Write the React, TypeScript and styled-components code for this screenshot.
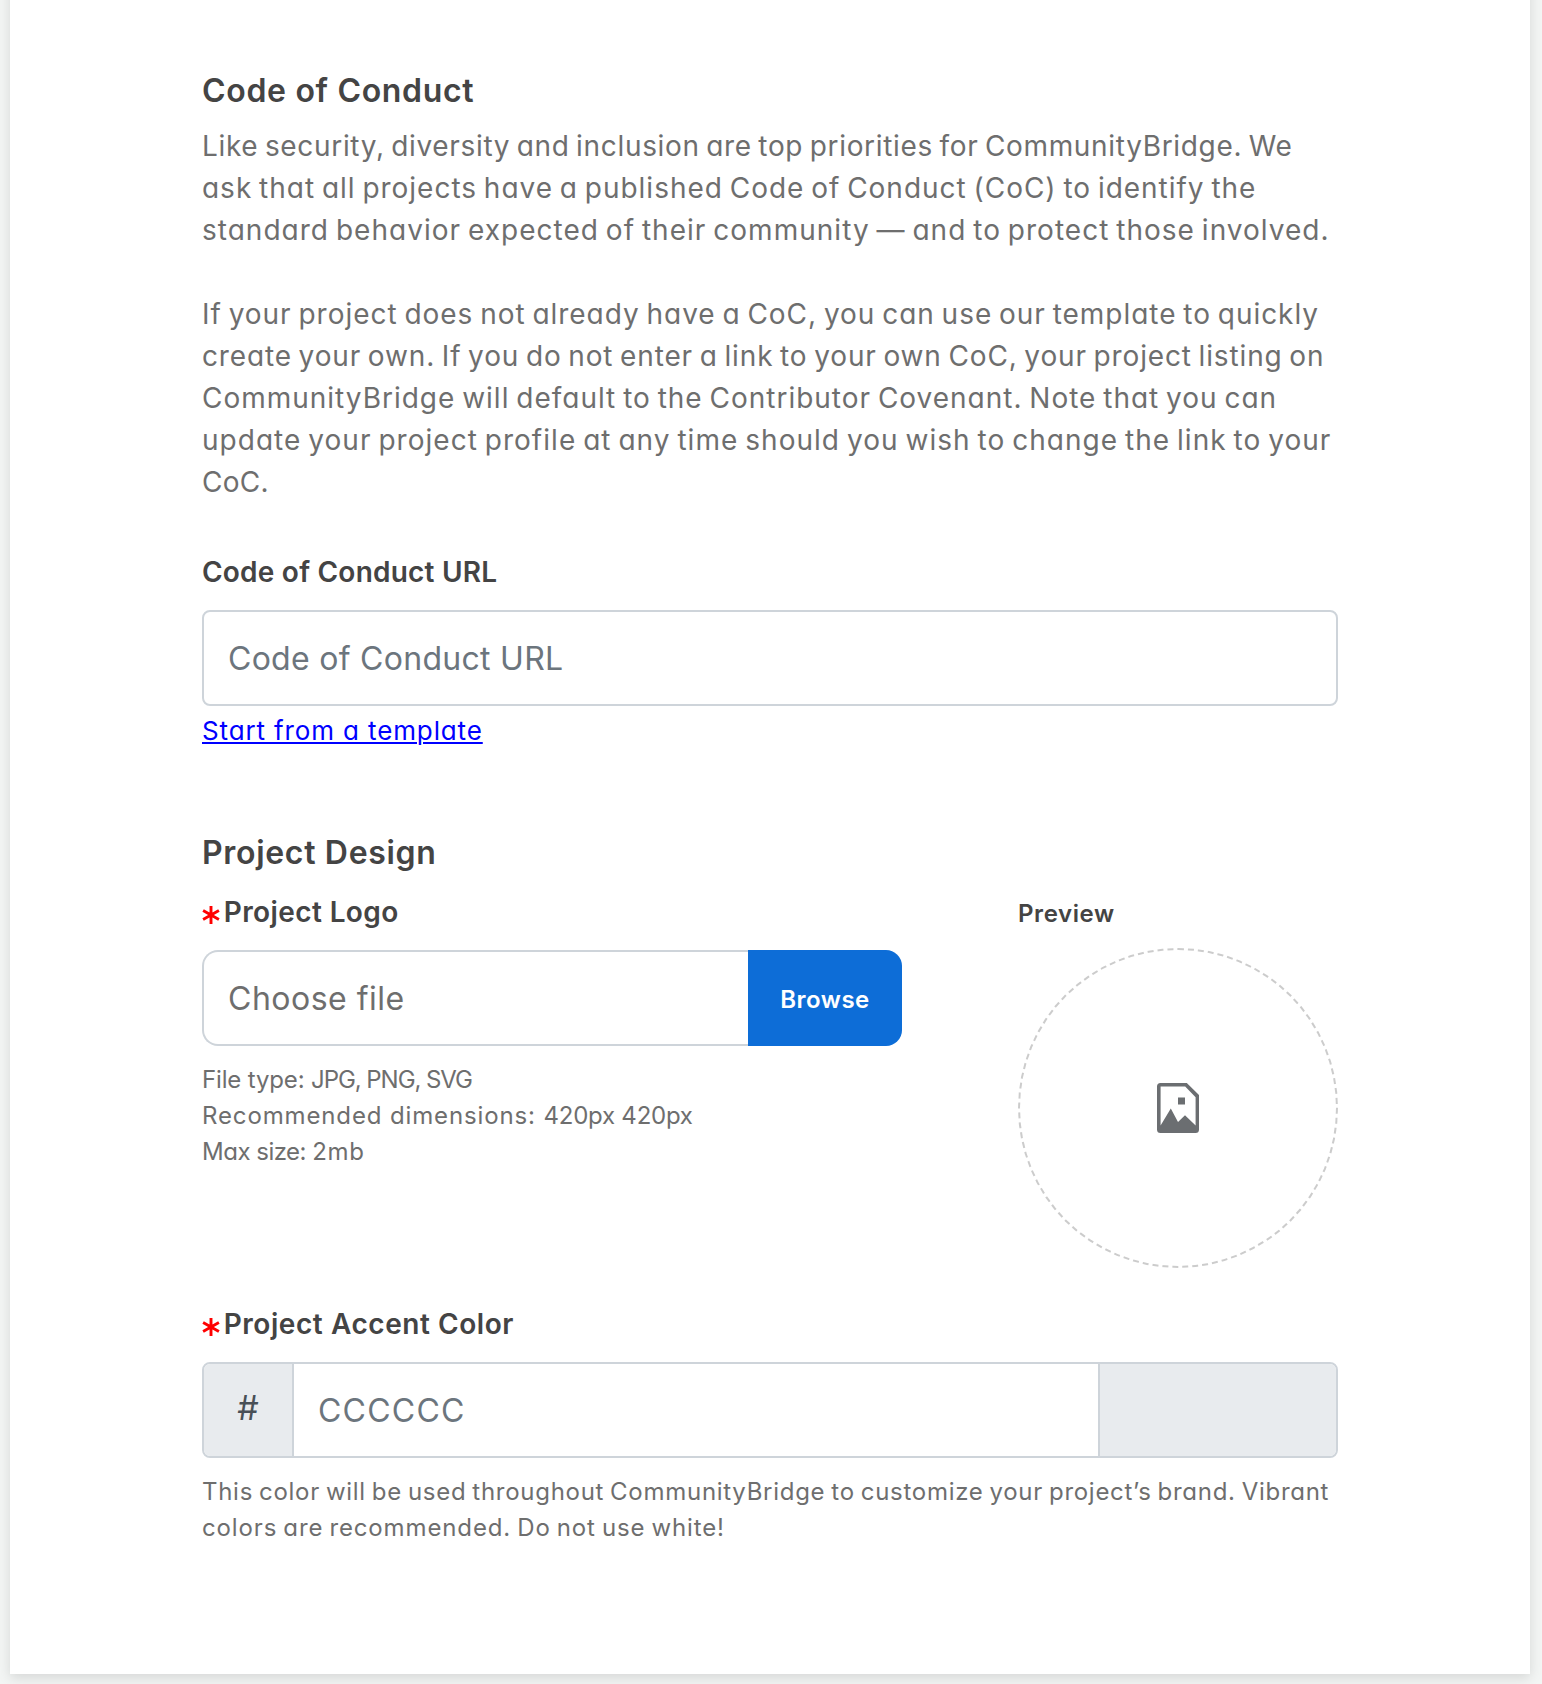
import React from 'react';
import styled, { createGlobalStyle } from 'styled-components';

const colors = {
  page: '#f3f5f4',
  heading: '#444444',
  body: '#6e6e6e',
  placeholder: '#6c757d',
  border: '#ced4da',
  addon: '#e8ebee',
  primary: '#0d6dd7',
  required: '#ff0000',
  link: '#0000ff',
};

const GlobalStyle = createGlobalStyle`
  *, *::before, *::after { box-sizing: border-box; }
  body {
    margin: 0;
    background: ${colors.page};
    color: ${colors.body};
    font-family: Inter, 'Open Sans', sans-serif;
    font-feature-settings: 'cv11';
  }
  input, button { font: inherit; font-feature-settings: inherit; }
`;

const Page = styled.div`
  height: 1684px;
  padding: 0 12px 0 10px;
  overflow: hidden;
`;

const Card = styled.main`
  height: 1694px;
  margin-top: -20px;
  padding: 87px 192px 0;
  background: #fff;
  box-shadow: 0 4px 12px rgba(0, 0, 0, 0.12);
`;

const Section = styled.section<{ $gap?: number }>`
  display: flex;
  flex-direction: column;
  margin-top: ${p => p.$gap ?? 0}px;
`;

const Heading = styled.h2`
  margin: 0;
  color: ${colors.heading};
  font-size: 32px;
  font-weight: 600;
  line-height: 48px;
  letter-spacing: 0.68px;
`;

const Paragraph = styled.p<{ $gap: number }>`
  display: flex;
  flex-direction: column;
  margin: ${p => p.$gap}px 0 0;
  font-size: 28px;
  line-height: 42px;
  word-spacing: -2px;
`;

const Hint = styled.p`
  display: flex;
  flex-direction: column;
  margin: 16px 0 0;
  font-size: 24px;
  line-height: 36px;
`;

const HintRow = styled.span`
  display: block;
  white-space: pre;
`;

const Line = styled.span<{ $track: number; $words?: number }>`
  white-space: pre;
  letter-spacing: ${p => p.$track}px;
  ${p => p.$words !== undefined && `word-spacing: ${p.$words}px;`}
`;

const Label = styled.label<{ $gap: number; $track: number }>`
  display: flex;
  align-items: center;
  gap: 3.7px;
  margin: ${p => p.$gap}px 0 17px;
  color: ${colors.heading};
  font-size: 28px;
  font-weight: 600;
  line-height: 42px;
  letter-spacing: ${p => p.$track}px;
`;

const Star = styled.svg`
  width: 18px;
  height: 18px;
  margin-top: 6px;
  fill: none;
  stroke: ${colors.required};
  stroke-width: 2.9;
`;

const PreviewLabel = styled.div`
  margin-bottom: 16px;
  color: ${colors.heading};
  font-size: 24px;
  font-weight: 600;
  line-height: 36px;
  letter-spacing: 0.59px;
`;

const TextInput = styled.input<{ $track: number }>`
  flex: 1;
  width: 100%;
  min-width: 0;
  height: 96px;
  flex-basis: 96px;
  padding: 0 24px;
  border: 2px solid ${colors.border};
  border-radius: 8px;
  background: #fff;
  font-size: 32px;
  letter-spacing: ${p => p.$track}px;
  outline: none;
  &::placeholder { color: ${colors.placeholder}; opacity: 1; }
`;

const TemplateLink = styled.a`
  align-self: flex-start;
  margin-top: 5px;
  color: ${colors.link};
  font-size: 26px;
  line-height: 39px;
  letter-spacing: 0.87px;
  text-decoration: underline;
  text-decoration-thickness: 2px;
  text-underline-offset: 2px;
`;

const LogoRow = styled.div`
  display: flex;
  justify-content: space-between;
`;

const UploadColumn = styled.div`
  width: 700px;
`;

const PreviewColumn = styled.div`
  width: 320px;
  padding-top: 19px;
`;

const FilePicker = styled.div`
  display: flex;
  height: 96px;
`;

const FileName = styled.div`
  flex: 1;
  padding: 1px 0 0 24px;
  border: 2px solid ${colors.border};
  border-right: 0;
  border-radius: 16px 0 0 16px;
  font-size: 32px;
  line-height: 92px;
  letter-spacing: 0.5px;
`;

const BrowseButton = styled.button`
  width: 154px;
  padding: 2px 0 0;
  border: 0;
  border-radius: 0 16px 16px 0;
  background: ${colors.primary};
  color: #fff;
  font-size: 24px;
  font-weight: 600;
  letter-spacing: 0.48px;
`;

const PreviewCircle = styled.div`
  display: flex;
  align-items: center;
  justify-content: center;
  width: 320px;
  height: 320px;
  border: 2px dashed #cccccc;
  border-radius: 50%;
`;

const ColorGroup = styled.div`
  display: flex;
  height: 96px;
  border: 2px solid ${colors.border};
  border-radius: 8px;
  overflow: hidden;
`;

const HashAddon = styled.span`
  width: 90px;
  padding-bottom: 4px;
  border-right: 2px solid ${colors.border};
  background: ${colors.addon};
  color: #495057;
  font-size: 34px;
  line-height: 88px;
  text-align: center;
`;

const ColorInput = styled(TextInput)`
  height: 92px;
  border: 0;
  border-radius: 0;
`;

const Swatch = styled.span`
  width: 238px;
  border-left: 2px solid ${colors.border};
  background: ${colors.addon};
`;

const introLines: [string, number][] = [
  ['Like security, diversity and inclusion are top priorities for CommunityBridge. We', 0.67],
  ['ask that all projects have a published Code of Conduct (CoC) to identify the', 0.98],
  ['standard behavior expected of their community — and to protect those involved.', 1.02],
];

const templateLines: [string, number][] = [
  ['If your project does not already have a CoC, you can use our template to quickly', 0.97],
  ['create your own. If you do not enter a link to your own CoC, your project listing on', 0.855],
  ['CommunityBridge will default to the Contributor Covenant. Note that you can', 0.99],
  ['update your project profile at any time should you wish to change the link to your', 1.03],
  ['CoC.', 0.3],
];

const fileSpecs: { name: string; value: string; nameTrack: number; valueTrack: number }[] = [
  { name: 'File type: ', value: 'JPG, PNG, SVG', nameTrack: -0.15, valueTrack: -1.06 },
  { name: 'Recommended dimensions: ', value: '420px 420px', nameTrack: 0.87, valueTrack: -0.24 },
  { name: 'Max size: ', value: '2mb', nameTrack: -0.5, valueTrack: 0.7 },
];

const colorLines: [string, number][] = [
  ['This color will be used throughout CommunityBridge to customize your project’s brand. Vibrant', 0.72],
  ['colors are recommended. Do not use white!', 0.87],
];

function Lines({ items, words }: { items: [string, number][]; words?: number }) {
  return (
    <>
      {items.map(([text, track]) => (
        <Line key={text} $track={track} $words={words}>{text}</Line>
      ))}
    </>
  );
}

function RequiredMark() {
  return (
    <Star viewBox="0 0 18 18" aria-hidden="true">
      <path d="M9 0V18M1.1 4.6L16.9 13.4M16.9 4.6L1.1 13.4" />
    </Star>
  );
}

function ImageFileIcon() {
  return (
    <svg width="42" height="50" viewBox="0 0 42 50" aria-hidden="true">
      <path
        fill="#6b6e71"
        fillRule="evenodd"
        d="M3.5 0H29.8L42 12V46.5A3.5 3.5 0 0 1 38.5 50H3.5A3.5 3.5 0 0 1 0 46.5V3.5A3.5 3.5 0 0 1 3.5 0ZM3.6 3.6V42.6L13.8 25.4L21 39L28 32.3L38.6 42.6V14.2L28.2 3.6ZM21 14.4H28V21.6H21Z"
      />
    </svg>
  );
}

export default function App() {
  return (
    <>
      <GlobalStyle />
      <Page>
        <Card>
          <Section>
            <Heading>Code of Conduct</Heading>
            <Paragraph $gap={10}><Lines items={introLines} /></Paragraph>
            <Paragraph $gap={42}><Lines items={templateLines} /></Paragraph>
            <Label htmlFor="coc-url" $gap={48} $track={0.22}>Code of Conduct URL</Label>
            <TextInput id="coc-url" placeholder="Code of Conduct URL" $track={0.28} />
            <TemplateLink href="#">Start from a template</TemplateLink>
          </Section>

          <Section $gap={79}>
            <Heading>Project Design</Heading>
            <LogoRow>
              <UploadColumn>
                <Label as="div" $gap={14} $track={0.4}><RequiredMark />Project Logo</Label>
                <FilePicker>
                  <FileName>Choose file</FileName>
                  <BrowseButton type="button">Browse</BrowseButton>
                </FilePicker>
                <Hint>
                  {fileSpecs.map(spec => (
                    <HintRow key={spec.name}>
                      <Line $track={spec.nameTrack}>{spec.name}</Line>
                      <Line $track={spec.valueTrack}>{spec.value}</Line>
                    </HintRow>
                  ))}
                </Hint>
              </UploadColumn>
              <PreviewColumn>
                <PreviewLabel>Preview</PreviewLabel>
                <PreviewCircle><ImageFileIcon /></PreviewCircle>
              </PreviewColumn>
            </LogoRow>

            <Label htmlFor="accent" $gap={35} $track={0.56}><RequiredMark />Project Accent Color</Label>
            <ColorGroup>
              <HashAddon>#</HashAddon>
              <ColorInput id="accent" placeholder="CCCCCC" $track={1.22} />
              <Swatch />
            </ColorGroup>
            <Hint><Lines items={colorLines} words={-1.5} /></Hint>
          </Section>
        </Card>
      </Page>
    </>
  );
}
